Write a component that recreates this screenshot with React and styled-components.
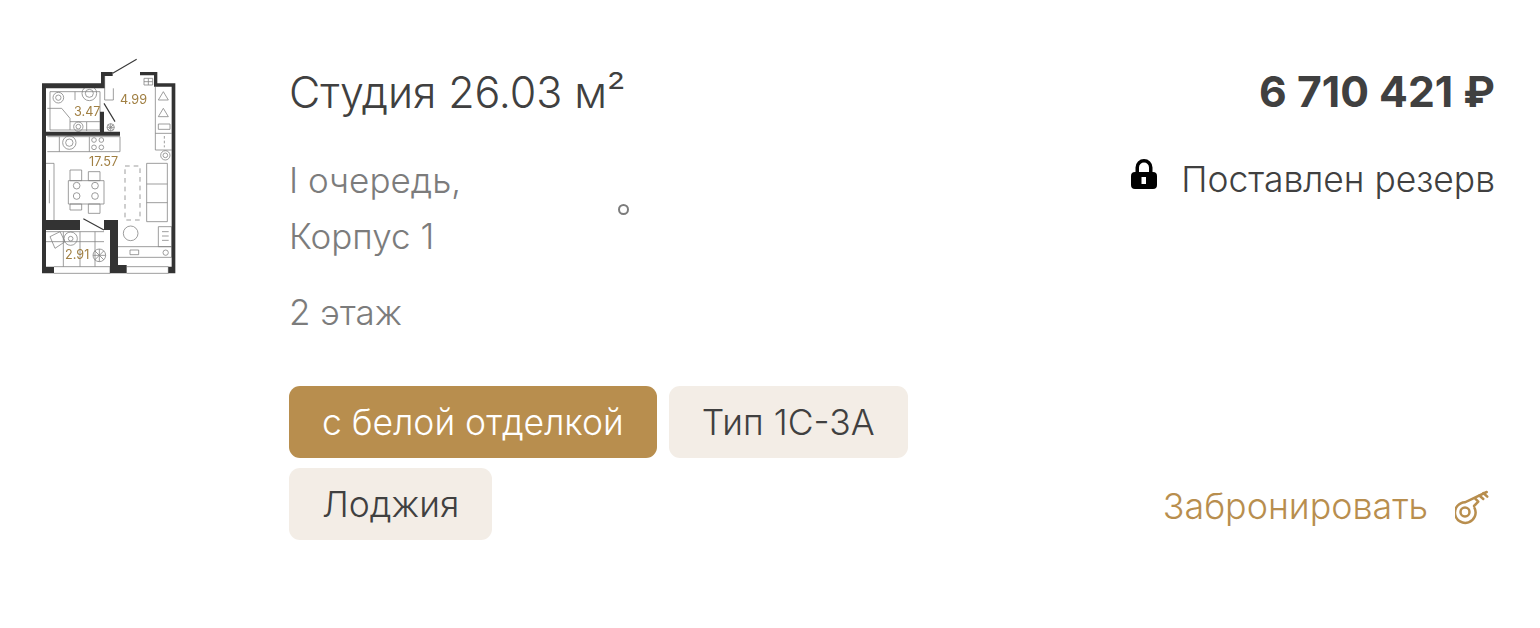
import React from 'react';
import styled, { createGlobalStyle } from 'styled-components';

const Global = createGlobalStyle`
  html, body { margin: 0; padding: 0; background: #fff; }
  body { font-family: Inter, "Noto Sans", sans-serif; color: #404040; }
`;

const walls = [
  'M36 100H213V66H248V78H224V115H48V245H210V185H222V245H270V257H48V510H150V540H48V650H72V670H36Z',
  'M330 66H382V100H436V670H415V650H425V110H372V76H330Z',
  'M222 510H264V645H290V670H240V540H222Z',
];

// кухня, санузел, мебель
const thin = [
  'M224 78V150H250V115',
  'M60 125H210V240H60Z', 'M52 175H95L120 205V240', 'M135 125V150', 'M120 215H170V243', 'M170 215H218',
  'M376 110V300H425', 'M376 250H425', 'M52 260H270V305H52', 'M88 260V305', 'M178 260V305',
  'M48 340H72V510', 'M58 390V460', 'M350 340H412V515H350Z', 'M350 402H412M350 458H412',
  'M115 392H222V462H115Z', 'M48 545H222', 'M48 575H222M100 545V650M150 545V650M195 545V650',
  'M264 590H425V622H264', 'M385 530H425V590H385Z', 'M72 650H240V670H72', 'M290 650H415V670H290',
  'M342 85H368V105H342Z', 'M342 95H368M355 85V105',
  'M300 600H326V614H300Z', 'M396 545H416M396 558H416M396 571H416',
];

const circles = [
  [85, 143, 16], [85, 143, 8], [178, 130, 22], [178, 130, 12], [145, 230, 14], [145, 230, 7], [118, 278, 20], [118, 278, 11],
  [192, 270, 7], [214, 270, 7], [192, 292, 7], [214, 292, 7], [406, 316, 14], [406, 316, 7],
  [140, 407, 10], [195, 407, 10], [140, 438, 10], [195, 438, 10], [302, 550, 22], [122, 566, 20], [122, 566, 7], [407, 608, 8],
];

const petals = [0, 45, 90, 135];

function FloorPlan() {
  return (
    <PlanSvg viewBox="0 0 480 690">
      <g fill="none" stroke="#6f6f6f" strokeWidth="2.4" opacity="0.85">
        {thin.map((d) => <path key={d} d={d} />)}
        {circles.map(([x, y, r]) => <circle key={`${x}-${y}-${r}`} cx={x} cy={y} r={r} />)}
        <path d="M285 348H330V510H285Z" strokeDasharray="14 12" />
        <path d="M120 360H155V392H120ZM175 365H210V392H175ZM120 462H155V480H120ZM175 462H210V490H175Z" />
        <path d="M400 125L385 150H415ZM400 175L385 200H415ZM385 222H420V238H385Z" />
        <path d="M403 258V266M403 272V280M403 286V292M60 560L90 545L105 575L75 595Z" />
        <circle cx="208" cy="616" r="19" />
        {petals.map((a) => <path key={a} d="M189 616H227" transform={`rotate(${a} 208 616)`} />)}
        <circle cx="242" cy="232" r="11" />
        {petals.map((a) => <path key={a} d="M231 232H253" transform={`rotate(${a} 242 232)`} />)}
      </g>
      <path d="M222 160L255 215M160 506L222 540M248 70L320 28" fill="none" stroke="#3a3a3a" strokeWidth="3.5" />
      <g fill="#333">
        {walls.map((d) => <path key={d} d={d} />)}
      </g>
      <PlanLabel x="270" y="162">4.99</PlanLabel>
      <PlanLabel x="132" y="198">3.47</PlanLabel>
      <PlanLabel x="177" y="348">17.57</PlanLabel>
      <PlanLabel x="105" y="628">2.91</PlanLabel>
    </PlanSvg>
  );
}

function LockIcon() {
  return (
    <LockSvg viewBox="0 0 26 30">
      <path fill="#000" fillRule="evenodd" d="M4.500 13V8.500a8.500 8.500 0 0 1 17 0V13H22a4 4 0 0 1 4 4v9a4 4 0 0 1-4 4H4a4 4 0 0 1-4-4v-9a4 4 0 0 1 4-4ZM8 13h10V8.500a5 5 0 0 0-10 0ZM10.500 18v7h4.500v-7Z" />
    </LockSvg>
  );
}

function KeyIcon() {
  return (
    <KeySvg viewBox="0 0 36 36" fill="none" stroke="#b88e4e" strokeWidth="2.500" strokeLinecap="round">
      <circle cx="10" cy="22" r="4.500" />
      <path d="M19.500 18A10.300 10.300 0 1 1 10 12.300L31.700 2" />
      <path d="M19 16L23.300 11.700M20 8.300L23.300 11.700M24.300 5.500L28.300 9M28.300 3L32.300 6.700" />
    </KeySvg>
  );
}

export default function App() {
  return (
    <>
      <Global />
      <Card>
        <PlanCol><FloorPlan /></PlanCol>
        <Info>
          <Title>Студия 26.03 м²</Title>
          <Address>I очередь,<br />Корпус 1</Address>
          <Floor>2 этаж</Floor>
          <Tags>
            <Tag $accent>с белой отделкой</Tag>
            <Tag>Тип 1С-3А</Tag>
            <Tag>Лоджия</Tag>
          </Tags>
        </Info>
        <Side>
          <Price>6 710 421 ₽</Price>
          <Status><LockIcon />Поставлен резерв</Status>
          <BookLink>Забронировать<KeyIcon /></BookLink>
        </Side>
        <Marker />
      </Card>
    </>
  );
}

const Card = styled.div`
  position: relative;
  width: 1540px;
  height: 628px;
  box-sizing: border-box;
  display: flex;
  padding: 50px 45px 0 30px;
  overflow: hidden;
`;

const PlanCol = styled.div`
  width: 259px;
  flex: none;
`;

const PlanSvg = styled.svg`
  display: block;
  width: 160px;
  height: 230px;
  filter: blur(0.35px);
`;

const PlanLabel = styled.text`
  font-family: Inter, sans-serif;
  font-size: 38px;
  fill: #a07f42;
`;

const Info = styled.div`
  flex: none;
  width: 640px;
  padding-top: 13px;
`;

const Title = styled.div`
  font-size: 43px;
  line-height: 58px;
  font-weight: 300;
  letter-spacing: -0.1px;
`;

const Address = styled.div`
  margin-top: 31px;
  font-size: 35px;
  line-height: 56px;
  font-weight: 300;
  color: #7c7c7c;
`;

const Floor = styled(Address)`
  margin-top: 20px;
`;

const Tags = styled.div`
  display: flex;
  flex-wrap: wrap;
  gap: 10px 12px;
  margin-top: 46px;
  width: 640px;
`;

const Tag = styled.span`
  box-sizing: border-box;
  height: 72px;
  padding: 0 33px;
  display: flex;
  align-items: center;
  border-radius: 11px;
  font-size: 35.5px;
  font-weight: 300;
  background: ${(p) => (p.$accent ? '#b88e4e' : '#f3ede6')};
  color: ${(p) => (p.$accent ? '#fff' : '#404040')};
`;

const Side = styled.div`
  flex: 1;
  display: flex;
  flex-direction: column;
  align-items: flex-end;
  padding-top: 13px;
`;

const Price = styled.div`
  font-size: 42.7px;
  line-height: 58px;
  font-weight: 700;
`;

const Status = styled.div`
  display: flex;
  align-items: flex-start;
  gap: 24px;
  margin-top: 31px;
  font-size: 35.4px;
  line-height: 56px;
  font-weight: 300;
`;

const BookLink = styled.a`
  display: flex;
  align-items: flex-start;
  gap: 27px;
  margin-top: 270px;
  font-size: 35.8px;
  line-height: 56px;
  font-weight: 300;
  color: #b88e4e;
`;

const LockSvg = styled.svg`
  display: block;
  flex: none;
  width: 26px;
  height: 30px;
  margin-top: 7px;
`;

const KeySvg = styled.svg`
  display: block;
  flex: none;
  width: 36px;
  height: 36px;
  margin: 12px 4px 0 0;
`;

const Marker = styled.span`
  position: absolute;
  left: 618px;
  top: 204px;
  width: 7px;
  height: 7px;
  border: 2px solid #7c7c7c;
  border-radius: 50%;
`;
